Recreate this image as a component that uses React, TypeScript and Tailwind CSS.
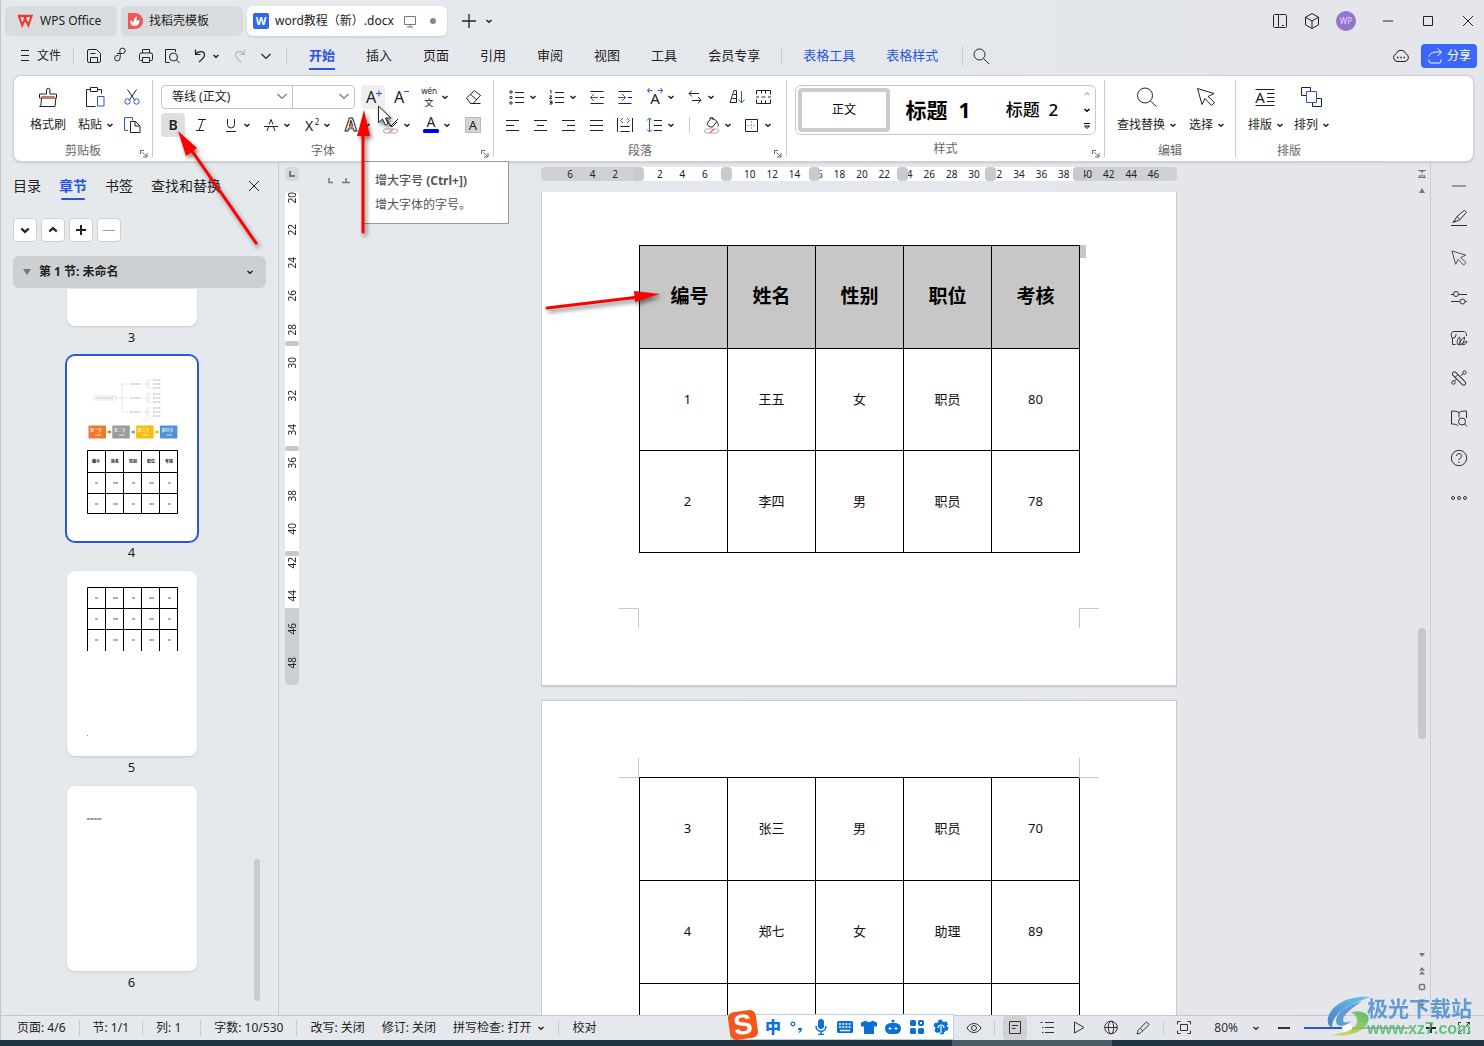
import React, { useState } from 'react';

const UI_FONT = "font-['Noto_Sans','Noto_Sans_CJK_SC',sans-serif]";
const BLUE = '#2b55e0';

/* ---------- icons: 24x24 grid, hairline strokes ---------- */

const icons: Record<string, React.ReactNode> = {
  menu: <path d="M8 6.500h8M8 11.500h8M8 16.500h8" />,
  save: <><path d="M5.500 7a1.500 1.500 0 0 1 1.500-1.500h7.500l4 4V17a1.500 1.500 0 0 1-1.500 1.500H7A1.500 1.500 0 0 1 5.500 17z" /><path d="M8.500 18.500v-5h7v5M8.500 9.500h5" /></>,
  link: <path d="M9 9.500h5.500a2.700 2.700 0 1 0-2.700-2.700c0 2 1 3.700.2 7.200a2.700 2.700 0 1 1-3-2.500h1.500" />,
  print: <path d="M8.500 9V5.500h7V9M8.500 16.500H6.500a1 1 0 0 1-1-1v-5a1.500 1.500 0 0 1 1.500-1.500h10a1.500 1.500 0 0 1 1.500 1.500v5a1 1 0 0 1-1 1h-2M8.500 13.500h7v5h-7z" />,
  preview: <><path d="M9.500 18.500H5.500v-13h10V8M5.500 5.500v11" /><circle cx="13.500" cy="13" r="4" /><path d="M16.500 16l3 3" /></>,
  undo: <path d="M7.500 5.500v5h5M7.500 10.300C10 6.500 16.500 6.500 16.500 11c0 3-3 4.500-5.500 7" strokeWidth="1.200" />,
  redo: <path d="M16.500 5.500v5h-5M16.500 10.300C14 6.500 7.500 6.500 7.500 11c0 3 3 4.500 5.500 7" strokeWidth="1.200" />,
  down: <path d="M7.500 10l4.500 4.500 4.500-4.500" strokeWidth="1.200" />,
  search: <><circle cx="10.500" cy="10.500" r="5.500" /><path d="M14.500 14.500l5.500 5.500" /></>,
  brush: <><path d="M10.500 9V5a1.700 1.700 0 0 1 3.400 0v4h6.600v4h-17V9zM5.500 13.500l-.5 5a2.500 2.500 0 0 1-1.500 3h15.500l.8-8" /><path d="M5.500 11.500h13" stroke="#d96d32" /></>,
  paste: <><path d="M7.500 4.500h-4v17h9M14.500 4.500h4v4M7.500 2.500h7v4h-7z" /><path d="M14.500 11.500h6.500v9.500h-6.500z" stroke={BLUE} /></>,
  cut: <><path d="M7.500 4.500l7.500 11M16.500 4.500L9 15.500" /><circle cx="7.500" cy="16.500" r="2.700" stroke={BLUE} /><circle cx="16.500" cy="16.500" r="2.700" stroke={BLUE} /></>,
  copy: <><path d="M8 17.500H4.500v-13h8v3" stroke={BLUE} /><path d="M10.500 8.500h5l4.500 4.500v6.500h-9.500zM15 8.500V13h5" /></>,
  eraser: <><path d="M5.500 13l8-7.500 6 5-7.500 8H9.500zM9.500 9.500l6.500 5.500M9.500 18.500h10" /></>,
  bullets: <><circle cx="6" cy="7" r="1.200" /><circle cx="6" cy="12.500" r="1.200" /><circle cx="6" cy="18" r="1.200" /><path d="M10 7.500h9M10 12.500h9M10 17.500h9" /></>,
  numbers: <><path d="M5 5.500h1v3M4.500 11h2.500l-2.500 2.500h2.500M4.500 16h2.500v3h-2.500M5 17.500h2M10 7.500h9M10 12.500h9M10 17.500h9" /></>,
  outdent: <><path d="M5.500 6.500h13M5.500 18.500h13M15 12.500h4" /><path d="M13 12.500H5.500m3.500-3.500l-3.500 3.500 3.500 3.500" stroke={BLUE} /></>,
  indent: <><path d="M5.500 6.500h13M5.500 18.500h13M15 12.500h4" /><path d="M5 12.500h7.500M9 9l3.500 3.500L9 16" stroke={BLUE} /></>,
  tabs: <path d="M9 5.500L6 8.500l3 3M6 8.500h10M15 12l3 3-3 3.500M18 15.500H9" />,
  sort: <><path d="M5 17.500h6.500v-12H9zM8.500 9.500h3M7.500 13.500h4" /><path d="M16.500 6v12M13.500 14.500l3 3.500 3-3.500" stroke={BLUE} /></>,
  cells: <path d="M5.500 9.500v-4h14v4M5.500 14.500v4h14v-4M10.500 5.500v3M14.500 5.500v3M10.500 15.500v3M14.500 15.500v3M5 12h3M10.500 12h4M17 12h3" />,
  left: <path d="M5 7.500h13M5 12.500h8M5 17.500h13" />,
  center: <path d="M5 7.500h13M8 12.500h7M5 17.500h13" />,
  right: <path d="M5 7.500h13M10 12.500h8M5 17.500h13" />,
  justify: <path d="M5 7.500h13M5 12.500h13M5 17.500h13" />,
  distribute: <><path d="M4.500 5v14M19.500 5v14M7.500 13.500h9M7.500 18.500h9" /><path d="M10 5L7.500 7.500 10 10M14 5l2.500 2.500L14 10" stroke={BLUE} /></>,
  spacing: <><path d="M11 7.500h8M11 12.500h8M11 17.500h8" /><path d="M6.500 5v14M4 7.500L6.500 5 9 7.500M4 16.500L6.500 19 9 16.500" stroke={BLUE} /></>,
  fill: <><path d="M8 9l4-4.500 5 4-4.500 5.500h-2.500L7 11.500zM17 9c1 2 2 3.500 1 4.500M9 6c1-2 4-2 4 1" /><rect x="4.500" y="16" width="14" height="4" rx="2" stroke="#aaa" /><path d="M10 19.500l4-3" stroke="#e33" /></>,
  border: <><path d="M5.500 6.500h12v12h-12z" /><path d="M11.500 8v9M7 12.500h9" stroke="#aaa" strokeDasharray="2 1" /></>,
  bigSearch: <><circle cx="11" cy="10.500" r="7.500" /><path d="M16.500 16l6 5.500" /></>,
  pointer: <path d="M3.500 3.500l4.500 16 3-6 6.500 7 3-3-6.500-6 6-3z" />,
  typeset: <path d="M2.500 4.500h19M2.500 20.500h19M14 8.500h7.500M14 12.500h7.500M14 16.500h7.500" />,
  arrange: <><path d="M7 10.500H2.500v-8h9V6M18 13.500h4.500v8h-9V18" /><path d="M7.500 6.500h10v11h-10z" stroke={BLUE} /></>,
  phone: <><path d="M11 5.500H6.500a1 1 0 0 0-1 1v11a1 1 0 0 0 1 1H11" /><rect x="10.500" y="5.500" width="8" height="13" rx="1" /><path d="M14 16.500h2" /></>,
  cube: <path d="M12 4.500l6.500 3.700v7.600L12 19.500l-6.500-3.700V8.200zM5.500 8.200L12 12l6.500-3.800M12 12v7.500" />,
  cloud: <><path d="M8 17.500a4 4 0 0 1-.8-7.700 5 5 0 0 1 9.600 0 4 4 0 0 1-.8 7.700z" /><path d="M8 13.500h1.500M11.300 13.500h1.500M14.500 13.500h1.500" strokeWidth="1.500" /></>,
  share: <path d="M6 15.500v1.500a2 2 0 0 0 2 2h8a2 2 0 0 0 2-2v-1.500M6 12.500c1-3.500 4-5 12-4.500M14.500 4.500L18.500 8 14.500 12" />,
  plus: <path d="M12 5v14M5 12h14" strokeWidth="1.300" />,
  close: <path d="M7 7l10 10M17 7L7 17" />,
  maximize: <path d="M7.500 7.500h9v9h-9z" />,
  minimize: <path d="M7 12h10" />,
  screen: <path d="M6.500 7.500h11v8h-11zM9 18h6M12 15.500V18" />,
  edit: <path d="M4 19.500h16M6 16.500l4-6 7.500-6.300 2 2-6.500 7.500-7 2.800zM10 10.500l3 3M9 15l-2.500 1" />,
  sliders: <><circle cx="9" cy="8" r="2.500" /><circle cx="15.500" cy="15.500" r="2.500" /><path d="M4 8.500h2.500M11.500 8.500H20M4 15.500h9M18 15.500h2" /></>,
  store: <path d="M8.500 18.500H5.500v-6.500C3 10 4 5.500 7 5.500h10.500c1.500.5 2 3 2 4.500M5 12c3 .5 4-1 4-4M11 19c-2-3 0-7 1.500-8 1 3 1 6-1.500 8zM12.500 19c0-4 3-7 5-8 0 3-1 7-5 8zM15 18.800c1-2.500 3-3.300 5-3.300-.5 2-2 3.300-5 3.300z" />,
  tools: <><rect x="3.500" y="10.500" width="17" height="4" rx="1.800" transform="rotate(45 12 12.500)" /><path d="M8 11.500l3-3" /><circle cx="17.500" cy="6.500" r="1.700" /><circle cx="6.500" cy="16.500" r="1.700" /><path d="M13.500 10l3-2.500M7.500 15l2-2" /></>,
  book: <><path d="M12 6.500c-2-1.200-4-1.500-7.500-1.500v13c3 0 4.500.3 6.500 1.500M12 6.500c2-1.200 4-1.500 7.500-1.500v7M12 6.500v5" /><circle cx="15" cy="15.500" r="3.500" /><path d="M17.500 18l2.500 2.500" /></>,
  help: <><circle cx="12" cy="12" r="7.700" /><path d="M9.500 10a2.500 2.500 0 1 1 3.500 2.300c-.8.4-1 .8-1 1.700M12 15.500v1.500" /></>,
  more: <><circle cx="6" cy="12" r="1.500" /><circle cx="12" cy="12" r="1.500" /><circle cx="18" cy="12" r="1.500" /></>,
  eye: <><path d="M5 12c3.500-6 10.500-6 14 0-3.500 6-10.500 6-14 0z" /><circle cx="12" cy="12" r="2.500" /></>,
  page: <path d="M6.500 5.500h11v12h-11zM9 9.500h6M9 12.500h3.500" />,
  outline: <path d="M10 6.500h9M10 11.500h9M10 16.500h9M5.500 6.500h2M7 11.500h1.500M7 16.500h1.500" />,
  play: <path d="M7.500 6v11l9.500-5.500z" />,
  globe: <><circle cx="12" cy="11.500" r="6.300" /><ellipse cx="12" cy="11.500" rx="2.700" ry="6.300" /><path d="M5.700 11.500h12.600" /></>,
  pen: <path d="M6 18c.5-3 1.500-4.500 3-5.500l6.500-6.700 2.700 2.700-6.700 6.500c-1 1.500-2.500 2.500-5.500 3zM9.500 12.500l2.300 2.300" />,
  fit: <path d="M5.500 8.500v-3h3M15.500 5.500h3v3M18.500 14.500v3h-3M8.500 17.500h-3v-3M8.500 8.500h7v6h-7z" />,
  expand: <path d="M6.500 15.500v2h3M17.500 8.500v-2h-3M6.500 17.500l4-4M17.500 6.500l-4 4M6.500 9V6.500H9M17.500 15v2.500H15" />,
};

function Icon({ name, className = '' }: { name: string; className?: string }) {
  return (
    <svg viewBox="0 0 24 24" fill="none" stroke="currentColor" aria-hidden="true" className={`w-6 h-6 shrink-0 ${className}`}>
      {icons[name]}
    </svg>
  );
}

function Caret({ className = '' }: { className?: string }) {
  return (
    <svg viewBox="0 0 8 8" fill="none" stroke="currentColor" strokeWidth="1.5" aria-hidden="true" className={`w-2 h-2 shrink-0 ${className}`}>
      <path d="M1.500 3L4 5.300 6.500 3" />
    </svg>
  );
}

/* Icons built around a letter keep it as text */
function LetterIcon({ kind }: { kind: string }) {
  const letter = (x: number, y: number, size: number, t: string, extra = {}) => (
    <text x={x} y={y} fontSize={size} textAnchor="middle" fill="currentColor" stroke="none" {...extra}>{t}</text>
  );
  return (
    <svg viewBox="0 0 24 24" fill="none" stroke="currentColor" aria-hidden="true" className="w-6 h-6 shrink-0 overflow-visible">
      {kind === 'grow' && <>{letter(10, 18, 16, 'A')}<path d="M15 8.500h6M18 5.500v6" stroke={BLUE} /></>}
      {kind === 'shrink' && <>{letter(10, 18, 16, 'A')}<path d="M15 6.500h5" stroke={BLUE} /></>}
      {kind === 'pinyin' && <>{letter(12, 9, 8, 'wén')}{letter(12, 21, 9, '文')}</>}
      {kind === 'bold' && letter(12, 17, 14, 'B', { fontWeight: 600 })}
      {kind === 'italic' && <path d="M9 6.500h8M7 17.500h8M14 6.500l-4 11" />}
      {kind === 'underline' && <path d="M8.500 6v5.500a3.500 3.500 0 0 0 7 0V6M7 18.500h10" />}
      {kind === 'strike' && <><path d="M8 18l1.500-4M16 18l-1.500-4M10 11.500l2-5 2 5M5 13.500h14" /></>}
      {kind === 'super' && <>{letter(10, 18, 14, 'X')}{letter(18, 12, 8, '2')}</>}
      {kind === 'effect' && <>{letter(12, 18, 17, 'A', { fill: 'none', stroke: 'currentColor', fontWeight: 700 })}<path d="M10 16l2-5 2 5z" stroke="#d96d32" /></>}
      {kind === 'highlight' && <><path d="M7 6l5 7 7-7M10 12l3 2 5-5" /><rect x="4.500" y="16" width="14" height="4" rx="2" stroke="#aaa" /><path d="M10 19.500l4-3" stroke="#e33" /></>}
      {kind === 'color' && <>{letter(12, 14, 14, 'A')}<rect x="4" y="16" width="16" height="4" rx="1.500" fill="#0000f0" stroke="none" /></>}
      {kind === 'shade' && <><rect x="4.500" y="4.500" width="15" height="15" fill="#d4d4d4" stroke="#bbb" />{letter(12, 17, 13, 'A')}</>}
      {kind === 'scale' && <>{letter(12, 19, 15, 'A')}<path d="M9.500 5.500h-5m2-2.500l-2 2.500 2 2.500M14.500 5.500h5m-2-2.500l2 2.500-2 2.500" stroke={BLUE} /></>}
      {kind === 'typeset' && <>{icons.typeset}{letter(7, 18, 15, 'A')}</>}
    </svg>
  );
}

const glyph = (icon: string) => (icon in icons && icon !== 'typeset' ? <Icon name={icon} /> : <LetterIcon kind={icon} />);

function ToolButton({ icon, label, className = '' }: { icon: string; label: string; className?: string }) {
  return (
    <button aria-label={label} className={`w-6 h-6 flex items-center justify-center rounded ${className}`}>
      {glyph(icon)}
    </button>
  );
}

function SplitButton({ icon, label }: { icon: string; label: string }) {
  return (
    <button aria-label={label} className="w-10 h-6 pl-1 flex items-center shrink-0">
      {glyph(icon)}
      <Caret />
    </button>
  );
}

function BigButton({ icon, label, caret = true }: { icon: string; label: string; caret?: boolean }) {
  return (
    <button className="flex flex-col items-center gap-1 shrink-0">
      <span className={caret ? 'pr-0.5' : ''}>{glyph(icon)}</span>
      <span className="h-6 flex items-center gap-1 whitespace-nowrap">
        {label}
        {caret && <Caret />}
      </span>
    </button>
  );
}

function Group({ title, width, launcher, children }: { title: string; width: string; launcher?: boolean; children: React.ReactNode }) {
  return (
    <section className={`relative flex flex-col shrink-0 pt-[5px] ${width}`}>
      <div className="h-[52px]">{children}</div>
      <h2 className="text-center text-[#666] leading-4 mt-1.5">{title}</h2>
      {launcher && (
        <button aria-label={`${title}设置`} className="absolute right-1 -bottom-px text-[#666]">
          <svg viewBox="0 0 8 8" fill="none" stroke="currentColor" className="w-2 h-2"><path d="M.5 4V.5H4M2.500 2.500l4 4M7 3v4H3" /></svg>
        </button>
      )}
    </section>
  );
}

const Rule = ({ className = 'h-4' }: { className?: string }) => <span className={`w-px shrink-0 bg-[#c8cbcf] ${className}`} />;

/* ---------- window chrome ---------- */

function TitleBar() {
  return (
    <header className="flex items-center h-9 shrink-0 pt-1.5 pl-1 text-[#222]">
      <div className="flex gap-1 items-center h-[30px]">
        <button className="w-28 h-[30px] rounded-md bg-[#d9dcdf] flex items-center gap-1.5 pl-3">
          <svg viewBox="0 0 18 14" fill="none" stroke="#e93b2f" strokeWidth="2.200" className="w-[17px]"><path d="M1 2h7l1 3M2 2l3.500 10L10 2h5.500L12 12 7.500 3" /></svg>
          WPS Office
        </button>
        <button className="w-[122px] h-[30px] rounded-md bg-[#d9dcdf] flex items-center gap-1.5 pl-1.5">
          <svg viewBox="0 0 16 16" className="w-4 h-4"><path d="M1 0h7a8 8 0 0 1 0 16H1z" fill="#f0575a" /><path d="M8 13C5 13 3 11 3.500 7.500 5 8 6 8.500 6.500 10 6.500 7 7.500 5 9.500 3c.5 2 .5 3-.5 5.500C10 7.500 11 7 12.500 7c0 3-1.500 6-4.500 6z" fill="#fff" /></svg>
          找稻壳模板
        </button>
        <button className="w-[200px] h-[30px] rounded-md bg-white shadow flex items-center pl-1.5 whitespace-nowrap">
          <span className="w-4 h-4 mr-1.5 rounded-xs bg-[#3366f0] text-white text-[11px] leading-4 font-bold text-center">W</span>
          word教程（新）.docx
          <Icon name="screen" className="ml-1 text-[#777]" />
          <span className="w-1.5 h-1.5 ml-2 rounded-full bg-[#888]" />
        </button>
      </div>
      <button aria-label="新建标签" className="ml-2.5"><Icon name="plus" /></button>
      <button aria-label="标签列表" className="ml-1"><Caret /></button>
      <div className="ml-auto flex items-center">
        <button aria-label="手机" className="w-8 flex justify-center"><Icon name="phone" /></button>
        <button aria-label="应用" className="w-8 flex justify-center"><Icon name="cube" /></button>
        <button className="w-5 h-5 mx-2 rounded-full bg-[#9673cf] text-[#e4d9f5] text-[8px]">WP</button>
        <button aria-label="最小化" className="w-10 ml-1 flex justify-center"><Icon name="minimize" /></button>
        <button aria-label="最大化" className="w-10 flex justify-center"><Icon name="maximize" /></button>
        <button aria-label="关闭" className="w-10 -mr-1 flex justify-center"><Icon name="close" /></button>
      </div>
    </header>
  );
}

const menus = ['插入', '页面', '引用', '审阅', '视图', '工具', '会员专享'];

function MenuBar() {
  return (
    <nav className="flex items-center h-[39px] shrink-0 pl-3 pr-[7px] text-[#222]">
      <button className="flex items-center"><Icon name="menu" />文件</button>
      <Rule className="h-4 mx-2 ml-3" />
      <div className="flex items-center gap-0.5">
        <ToolButton icon="save" label="保存" />
        <ToolButton icon="link" label="输出" />
        <ToolButton icon="print" label="打印" />
        <ToolButton icon="preview" label="打印预览" />
      </div>
      <button aria-label="撤销" className="ml-1 w-8 flex items-center"><Icon name="undo" /><Caret /></button>
      <button aria-label="恢复" className="ml-2 text-[#b5b8bc]"><Icon name="redo" /></button>
      <button aria-label="更多命令" className="ml-0.5"><Icon name="down" /></button>
      <Rule className="h-4 ml-2" />
      <div className="flex items-center gap-[31px] text-[13px] ml-[22px] whitespace-nowrap">
        <button className="h-7 pt-0.5 font-bold text-[#2b55e0] border-b-2 border-[#2b55e0]">开始</button>
        {menus.map(m => <button key={m}>{m}</button>)}
      </div>
      <Rule className="h-4 mx-[21px]" />
      <div className="flex items-center gap-[31px] text-[13px] text-[#2b55e0] whitespace-nowrap">
        <button>表格工具</button>
        <button>表格样式</button>
      </div>
      <Rule className="h-5 ml-6 mr-1.5" />
      <button aria-label="搜索"><Icon name="search" /></button>
      <button aria-label="云文档" className="ml-auto mr-2"><Icon name="cloud" /></button>
      <button className="w-14 h-6 rounded bg-[#3a66fb] text-white flex items-center pl-0.5"><Icon name="share" />分享</button>
    </nav>
  );
}

function Ribbon() {
  return (
    <div className="ml-3 mr-[10px] h-[87px] shrink-0 rounded-lg bg-white border border-[#cfd1d4] shadow flex py-1 overflow-hidden text-[#222]">
      <Group title="剪贴板" width="w-[138px]" launcher>
        <div className="flex pl-4">
          <BigButton icon="brush" label="格式刷" caret={false} />
          <div className="ml-3"><BigButton icon="paste" label="粘贴" /></div>
          <div className="flex flex-col gap-1 ml-1.5">
            <ToolButton icon="cut" label="剪切" />
            <ToolButton icon="copy" label="复制" />
          </div>
        </div>
      </Group>
      <Rule className="h-full" />
      <Group title="字体" width="w-[340px]" launcher>
        <div className="flex flex-col gap-1 pl-2">
          <div className="flex items-center">
            <div className="flex h-6 w-[194px] border border-[#c4c4c4] rounded">
              <div className="relative w-[131px] border-r border-[#c4c4c4]">
                <select aria-label="字体" className="appearance-none w-full h-full pl-2.5 bg-transparent outline-none"><option>等线 (正文)</option></select>
                <Icon name="down" className="absolute -right-0.5 -top-0.5 text-[#777] pointer-events-none" />
              </div>
              <div className="relative flex-1">
                <select aria-label="字号" className="appearance-none w-full h-full bg-transparent outline-none"><option></option></select>
                <Icon name="down" className="absolute -right-0.5 -top-0.5 text-[#777] pointer-events-none" />
              </div>
            </div>
            <ToolButton icon="grow" label="增大字号" className="ml-1.5 bg-[#efefef]" />
            <ToolButton icon="shrink" label="减小字号" className="ml-1" />
            <SplitButton icon="pinyin" label="拼音指南" />
            <ToolButton icon="eraser" label="清除格式" className="ml-2" />
          </div>
          <div className="flex items-center">
            <ToolButton icon="bold" label="加粗" className="bg-[#dfdfdf]" />
            <ToolButton icon="italic" label="倾斜" className="mx-1 mr-0.5" />
            <SplitButton icon="underline" label="下划线" />
            <SplitButton icon="strike" label="删除线" />
            <SplitButton icon="super" label="上标" />
            <SplitButton icon="effect" label="文字效果" />
            <SplitButton icon="highlight" label="突出显示" />
            <SplitButton icon="color" label="字体颜色" />
            <ToolButton icon="shade" label="字符底纹" className="ml-1.5" />
          </div>
        </div>
      </Group>
      <Rule className="h-full" />
      <Group title="段落" width="w-[292px]" launcher>
        <div className="flex flex-col gap-1 pl-[7px]">
          <div className="flex items-center">
            <SplitButton icon="bullets" label="项目符号" />
            <SplitButton icon="numbers" label="编号" />
            <ToolButton icon="outdent" label="减少缩进" className="ml-1" />
            <ToolButton icon="indent" label="增加缩进" className="ml-1" />
            <span className="w-0.5" />
            <SplitButton icon="scale" label="中文版式" />
            <SplitButton icon="tabs" label="制表位" />
            <ToolButton icon="sort" label="排序" className="ml-1.5" />
            <ToolButton icon="cells" label="分散" className="ml-0.5" />
          </div>
          <div className="flex items-center">
            <div className="flex gap-1">
              {['left', 'center', 'right', 'justify', 'distribute'].map(a => <ToolButton key={a} icon={a} label={a} />)}
            </div>
            <span className="w-0.5" />
            <SplitButton icon="spacing" label="行距" />
            <Rule className="h-4 ml-2.5 mr-1.5" />
            <SplitButton icon="fill" label="底纹" />
            <SplitButton icon="border" label="边框" />
          </div>
        </div>
      </Group>
      <Rule className="h-full" />
      <Group title="样式" width="w-[317px]" launcher>
        <div className="mx-2 h-[50px] border border-[#c8c8c8] rounded-md flex items-center p-0.5 pr-1 text-black">
          <button className="w-[92px] h-11 border-4 border-[#ccc] rounded">正文</button>
          <button className="w-24 text-[21px] font-bold">标题&nbsp; 1</button>
          <button className="w-[92px] text-[17px] font-medium">标题&nbsp; 2</button>
          <div className="flex flex-col items-center justify-between h-10 ml-auto">
            <button aria-label="上一行" className="flex text-[#bbb]"><Caret className="rotate-180" /></button>
            <button aria-label="下一行" className="flex"><Caret /></button>
            <button aria-label="全部样式" className="flex"><svg viewBox="0 0 8 8" fill="none" stroke="currentColor" className="w-2 h-2"><path d="M1 1.500h6M1.500 4h5L4 6.500z" /></svg></button>
          </div>
        </div>
      </Group>
      <Rule className="h-full" />
      <Group title="编辑" width="w-[130px]">
        <div className="flex pl-3 gap-3">
          <BigButton icon="bigSearch" label="查找替换" />
          <BigButton icon="pointer" label="选择" />
        </div>
      </Group>
      <Rule className="h-full" />
      <Group title="排版" width="w-[106px]">
        <div className="flex pl-3 gap-2.5">
          <BigButton icon="typeset" label="排版" />
          <BigButton icon="arrange" label="排列" />
        </div>
      </Group>
    </div>
  );
}

/* ---------- chapter panel ---------- */

const thumbCols = [29, 48, 66, 84, 102];
const headings = ['编号', '姓名', '性别', '职位', '考核'];

function Smudges({ y }: { y: number }) {
  return (
    <g fill="#b0b0b0">
      {thumbCols.map((x, i) => <rect key={x} x={x - (i % 2 ? 2 : 1)} y={y} width={i % 2 ? 5 : 3} height="2" />)}
    </g>
  );
}

function Thumb4() {
  const steps = [['#f07a2c', '第一步'], ['#9b9b9b', '第二步'], ['#f5bd0c', '第三步'], ['#4f93d6', '第四步']];
  return (
    <svg viewBox="0 0 130 185" className="w-full h-full" fill="none">
      <g stroke="#d4d5dc" strokeWidth=".6">
        <path d="M49 42h6M61 28h-6v28h6M55 42h6M76 28h4M76 42h4M76 56h4" />
        {[28, 42, 56].map(y => <path key={y} d={`M84 ${y - 4}h-4v8h4M80 ${y}h4`} />)}
        <rect x="27" y="40" width="22" height="4" />
      </g>
      <g stroke="#b4b4b4" strokeWidth="1.200" strokeDasharray="2 .6">
        <path d="M29 42h17" />
        {[28, 42, 56].map(y => (
          <path key={y} d={`M63 ${y}h11M86 ${y - 4}h8M86 ${y}h8M86 ${y + 4}h8`} />
        ))}
      </g>
      {steps.map(([color, label], i) => (
        <g key={label}>
          <rect x={21.500 + i * 23.800} y="69.500" width="17.500" height="13" rx="1" fill={color} />
          <text x={23 + i * 23.800} y="75.500" fontSize="4" fill="#fff">{label}</text>
          <path d={`M${28 + i * 23.800} 79h6`} stroke="#fff" strokeWidth="1" opacity=".7" />
          {i < 3 && <path d={`M${40.500 + i * 23.800} 75h2v-1.500l2 2.500-2 2.500V77h-2z`} fill={color} />}
        </g>
      ))}
      <path d="M20.500 94.500h90v63h-90zM20.500 116.500h90M20.500 137.500h90M38.500 94.500v63M56.500 94.500v63M74.500 94.500v63M92.500 94.500v63" stroke="#000" />
      {headings.map((h, i) => <text key={h} x={thumbCols[i]} y="106.500" fontSize="4" fontWeight="700" textAnchor="middle" fill="#222">{h}</text>)}
      <Smudges y={126} />
      <Smudges y={147} />
    </svg>
  );
}

function Thumb5() {
  return (
    <svg viewBox="0 0 130 185" className="w-full h-full" fill="none">
      <path d="M20.500 80V16.500h90V80M20.500 37.500h90M20.500 58.500h90M38.500 16.500V80M56.500 16.500V80M74.500 16.500V80M92.500 16.500V80" stroke="#000" />
      <Smudges y={26} />
      <Smudges y={47} />
      <Smudges y={68} />
      <rect x="20" y="164" width="1" height="1" fill="#999" />
    </svg>
  );
}

function Thumb6() {
  return (
    <svg viewBox="0 0 130 185" className="w-full h-full">
      <path d="M20 33h15" stroke="#777" strokeWidth="1.500" strokeDasharray="3 .6" />
    </svg>
  );
}

function ChapterPanel() {
  const [current, setCurrent] = useState(4);
  const pages = [
    { no: 3, art: null },
    { no: 4, art: <Thumb4 /> },
    { no: 5, art: <Thumb5 /> },
    { no: 6, art: <Thumb6 /> },
  ];
  const small = 'w-6 h-6 rounded bg-white border border-[#cdd0d3] flex items-center justify-center';
  return (
    <aside className="relative w-[278px] shrink-0 border-r border-[#c9cccf] flex flex-col text-[#222]">
      <div className="flex items-start gap-[18px] pl-3 pt-3.5 text-sm whitespace-nowrap h-14">
        <button>目录</button>
        <button className="font-bold text-[#2b55e0] flex flex-col items-center">章节<span className="w-6 h-0.5 mt-0.5 rounded bg-[#2b55e0]" /></button>
        <button>书签</button>
        <button>查找和替换</button>
        <button aria-label="关闭面板" className="ml-auto mr-3 -mt-0.5"><Icon name="close" /></button>
      </div>
      <div className="flex gap-1 pl-3">
        <button aria-label="展开" className={small}><Caret className="scale-150" /></button>
        <button aria-label="收起" className={small}><Caret className="scale-150 rotate-180" /></button>
        <button aria-label="新增节" className={small}><svg viewBox="0 0 10 10" className="w-2.5 h-2.5" stroke="#222" strokeWidth="2"><path d="M5 0v10M0 5h10" /></svg></button>
        <button aria-label="删除节" className={small}><span className="w-3 h-px bg-[#999]" /></button>
      </div>
      <button className="flex items-center h-8 mt-3.5 ml-3 mr-3 pl-2.5 pr-3 rounded-md bg-[#cdd0d2] font-bold shrink-0">
        <svg viewBox="0 0 8 8" className="w-2 h-2 mr-2" fill="#777"><path d="M0 1h8L4 7z" /></svg>
        第 1 节: 未命名
        <Caret className="ml-auto" />
      </button>
      <div className="flex-1 min-h-0 overflow-hidden flex flex-col items-center pt-px pr-4">
        {pages.map(p => (
          <div key={p.no} className="flex flex-col items-center shrink-0">
            <button
              aria-label={`第${p.no}页`}
              onClick={() => setCurrent(p.no)}
              className={`w-[130px] bg-white overflow-hidden ${p.no === 3 ? 'h-[37px] rounded-b-lg' : 'h-[185px] rounded-lg'} ${current === p.no ? 'ring-2 ring-[#2b55e0]' : 'shadow'}`}
            >
              {p.art}
            </button>
            <span className="h-[30px] leading-[22px] text-[13px]">{p.no}</span>
          </div>
        ))}
      </div>
      <div className="absolute right-[18px] bottom-3.5 w-1.5 h-[142px] rounded bg-[#c8cacc]" />
    </aside>
  );
}

/* ---------- document ---------- */

const hTicks = ['6', '4', '2', '', '2', '4', '6', '', ...Array.from({ length: 19 }, (_, i) => String(10 + i * 2))];
const vTicks = Array.from({ length: 14 }, (_, i) => String(22 + i * 2));

function HorizontalRuler() {
  return (
    <div className="relative h-3.5 mt-[5px] mb-[11px] rounded bg-white overflow-hidden text-[10px] leading-[14px] text-[#222] shrink-0">
      <div className="absolute inset-y-0 left-0 w-[97px] bg-[#cfd1d4]" />
      <div className="absolute inset-y-0 right-0 w-[97px] bg-[#cfd1d4]" />
      <div className="relative flex pl-[18px] pr-3">
        {hTicks.map((t, i) => <span key={i} className="flex-1 w-0 flex justify-center">{t}</span>)}
      </div>
      <div className="absolute inset-y-0 left-[92px] flex gap-[77px]">
        {[0, 1, 2, 3, 4, 5].map(i => <span key={i} className="w-[11px] rounded bg-[#cacaca]" />)}
      </div>
    </div>
  );
}

function VerticalRuler() {
  const digit = '[writing-mode:vertical-rl] rotate-180';
  return (
    <div className="w-[21px] shrink-0 pl-1.5 pt-[5px] text-[10px] leading-[14px] text-[#222]">
      <div className="w-3.5 h-3.5 rounded bg-[#d6d8da] mb-[11px] flex items-center justify-center">
        <span className="w-1.5 h-1.5 border-l-2 border-b-2 border-[#777]" />
      </div>
      <div className="relative w-3.5 h-[493px] pb-1.5 rounded bg-white overflow-hidden flex flex-col items-center">
        <div className="absolute inset-x-0 bottom-0 h-[77px] bg-[#cdd0d3]" />
        <div className="h-[21px] shrink-0"><span className={`block ${digit}`}>20</span></div>
        {vTicks.map(t => (
          <div key={t} className="relative flex-1 h-0 flex items-center"><span className={digit}>{t}</span></div>
        ))}
        <div className="absolute inset-x-0 top-[149px] flex flex-col gap-[100px]">
          {[0, 1, 2].map(i => <span key={i} className="h-[5px] rounded-full bg-[#c6c8ca]" />)}
        </div>
      </div>
    </div>
  );
}

function StaffTable({ rows, head }: { rows: string[][]; head?: boolean }) {
  const cell = 'border border-black p-0 first:pl-2 text-center';
  return (
    <table className="w-[441px] shrink-0 table-fixed border-collapse text-[13px] text-[#111]">
      {head && (
        <thead>
          <tr className="h-[103px] bg-[#c7c7c7] text-[19px] text-black">
            {headings.map(h => <th key={h} className="border border-black p-0 first:pl-3 text-center">{h}</th>)}
          </tr>
        </thead>
      )}
      <tbody>
        {rows.map((r, i) => (
          <tr key={i} className={head ? 'h-[102px]' : 'h-[103px]'}>{r.map((c, j) => <td key={j} className={cell}>{c}</td>)}</tr>
        ))}
      </tbody>
    </table>
  );
}

function DocumentArea() {
  const sheet = 'bg-white border-x border-[#c9c9c9] px-[97px] shrink-0 shadow-sm';
  const mark = 'w-5 h-5 border-[#c9c9c9]';
  return (
    <main className="relative flex-1 min-w-0 flex">
      <VerticalRuler />
      <div className="flex-1 min-w-0 flex flex-col items-center overflow-hidden">
        <div className="w-[636px] flex flex-col h-full">
          <HorizontalRuler />
          <div className="flex-1 min-h-0 overflow-hidden flex flex-col">
            <div className={`${sheet} h-[494px] border-b pt-[53px] flex flex-col`}>
              <div className="flex">
                <StaffTable head rows={[['1', '王五', '女', '职员', '80'], ['2', '李四', '男', '职员', '78']]} />
                <span className="w-1.5 h-[13px] shrink-0 bg-[#c7c7c7]" />
              </div>
              <div className="flex justify-between mt-[55px] -mx-5">
                <span className={`${mark} border-t border-r`} />
                <span className={`${mark} border-t border-l`} />
              </div>
            </div>
            <div className={`${sheet} border-t mt-3.5 pt-[57px] pb-24`}>
              <div className="flex justify-between -mx-5 -mb-px">
                <span className={`${mark} border-b border-r`} />
                <span className={`${mark} border-b border-l`} />
              </div>
              <StaffTable rows={[['3', '张三', '男', '职员', '70'], ['4', '郑七', '女', '助理', '89'], ['', '', '', '', '']]} />
            </div>
          </div>
        </div>
      </div>
      <div className="w-3 shrink-0 flex flex-col items-start text-[#777] pt-2 pb-2">
        <svg viewBox="0 0 8 8" className="w-2 h-2" fill="currentColor"><path d="M0 0h8v1H6L4 3 2 1H0zM0 7h8v1H0zM1 5h1.500v2H1zM3.500 4h1v3h-1zM5.500 5H7v2H5.500z" /></svg>
        <svg viewBox="0 0 8 8" className="w-2 h-2 mt-2" fill="currentColor"><path d="M4 2l3 5H1z" /></svg>
        <div className="mt-[434px] w-2 h-[111px] rounded bg-[#c6c8cb]" />
        <div className="mt-auto flex flex-col gap-2">
          <svg viewBox="0 0 8 8" className="w-2 h-2" fill="currentColor"><path d="M4 6L1 2h6z" /></svg>
          <svg viewBox="0 0 8 8" className="w-2 h-2" fill="currentColor"><path d="M4 0l3 3.500H1zM4 4l3 3.500H1z" /></svg>
          <svg viewBox="0 0 8 8" className="w-2 h-2" fill="none" stroke="currentColor" strokeWidth="1.500"><rect x="1.500" y="1.500" width="5" height="5" rx="1" /></svg>
          <svg viewBox="0 0 8 8" className="w-2 h-2" fill="currentColor"><path d="M4 4L1 .5h6zM4 8L1 4.500h6z" /></svg>
        </div>
      </div>
      {/* tab stop hints */}
      <svg viewBox="0 0 22 6" className="absolute left-[49px] top-4 w-[22px] h-1.5" fill="none" stroke="#777" strokeWidth="1.500"><path d="M1 0v4.500h4M14 4.500h8M18 0v4.500" /></svg>
      {/* tooltip of the grow-font button */}
      <div role="tooltip" className="absolute left-[83px] -top-px w-[147px] h-[63px] bg-white border border-[#9a9a9a] pl-3 pt-2 text-[#555] whitespace-nowrap">
        <p className="font-medium leading-[22px]">增大字号 <b>(Ctrl+])</b></p>
        <p className="leading-[26px]">增大字体的字号。</p>
      </div>
    </main>
  );
}

function SideTools() {
  return (
    <aside className="w-[54px] shrink-0 border-l border-[#c9cccf] flex flex-col items-center gap-4 pt-3 pr-0.5 pl-1 text-[#333]">
      <button aria-label="收起侧栏" className="h-6 flex items-center"><span className="w-3.5 h-0.5 bg-[#999]" /></button>
      <div className="flex flex-col gap-4 -mt-2">
        {['edit', 'pointer', 'sliders', 'store', 'tools', 'book', 'help', 'more'].map(n => (
          <button key={n} aria-label={n}><Icon name={n} className={n === 'pointer' ? 'p-0.5' : ''} /></button>
        ))}
      </div>
    </aside>
  );
}

/* ---------- bottom bars ---------- */

function StatusBar() {
  return (
    <footer className="flex items-center h-[25px] shrink-0 border-t border-[#c5c8cb] pl-4 pr-2 pb-px text-[#222] whitespace-nowrap">
      <div className="flex items-center gap-[13px]">
        <span>页面: 4/6</span><Rule />
        <span>节: 1/1</span><Rule />
        <span className="pr-1.5">列: 1</span><Rule />
        <span>字数: 10/530</span><Rule />
        <button>改写: 关闭</button>
        <button className="ml-1">修订: 关闭</button>
        <button className="ml-1 flex items-center gap-1.5">拼写检查: 打开 <Caret /></button>
        <Rule />
        <button>校对</button>
      </div>
      <div className="ml-auto flex items-center text-[#333]">
        <button aria-label="护眼模式"><Icon name="eye" /></button>
        <Rule className="h-3.5 mx-2" />
        <button aria-label="页面视图" className="rounded bg-[#cfd1d5]"><Icon name="page" /></button>
        <button aria-label="大纲视图" className="ml-2"><Icon name="outline" /></button>
        <button aria-label="阅读" className="ml-2"><Icon name="play" /></button>
        <button aria-label="网页" className="ml-2"><Icon name="globe" /></button>
        <button aria-label="书写" className="ml-2"><Icon name="pen" /></button>
        <Rule className="h-3.5 ml-2" />
        <button aria-label="适合页面" className="ml-2"><Icon name="fit" /></button>
        <button className="ml-[18px] flex items-center gap-3.5">80% <Caret /></button>
        <button aria-label="缩小" className="ml-[18px] w-3 h-6 flex items-center"><span className="w-3 h-0.5 bg-[#333]" /></button>
        <input
          type="range"
          aria-label="缩放"
          min={0}
          max={100}
          defaultValue={40}
          className="appearance-none w-[106px] h-0.5 ml-3.5 bg-linear-to-r from-[#2b55e0] from-40% to-[#aaa] to-40% [&::-webkit-slider-thumb]:appearance-none [&::-webkit-slider-thumb]:w-2.5 [&::-webkit-slider-thumb]:h-2.5 [&::-webkit-slider-thumb]:rounded-full [&::-webkit-slider-thumb]:bg-white"
        />
        <button aria-label="放大" className="ml-4"><svg viewBox="0 0 10 10" className="w-2.5 h-2.5" stroke="#222" strokeWidth="1.800"><path d="M5 0v10M0 5h10" /></svg></button>
        <button aria-label="全屏" className="ml-4"><Icon name="expand" /></button>
      </div>
    </footer>
  );
}

function InputMethodBar() {
  const svg = 'w-4 h-4 shrink-0';
  return (
    <div className="absolute left-[730px] bottom-1.5 w-56 h-[26px] bg-white border border-[#b9cde3] flex items-center gap-2 pl-[34px] text-[#0b6fd8]">
      <span className="absolute -left-0.5 bottom-0 w-7 h-7 rounded-md bg-[#f4571c] -rotate-8 text-white text-[28px] leading-7 font-bold text-center font-['Liberation_Sans']">S</span>
      <span className="w-4 text-base leading-6 font-black">中</span>
      <svg viewBox="0 0 16 16" className={svg} fill="currentColor"><circle cx="4" cy="5" r="1.800" fill="none" stroke="currentColor" strokeWidth="1.300" /><path d="M9 9h4c0 3-1 4-3 5l-.5-1c1-.5 1.300-1 1.300-2H9z" /></svg>
      <svg viewBox="0 0 16 16" className={svg} fill="currentColor"><rect x="5" y="0" width="6" height="10" rx="3" /><path d="M3 7c0 7 10 7 10 0M8 12v3M5 15.500h6" fill="none" stroke="currentColor" strokeWidth="1.500" /></svg>
      <svg viewBox="0 0 16 16" className={svg}><rect x="0" y="2" width="16" height="12" rx="1.500" fill="currentColor" /><path d="M2 5h12M2 8h12" stroke="#fff" strokeWidth="1.600" strokeDasharray="2 1.200" /><path d="M3 11.500h10" stroke="#fff" strokeWidth="1.500" /></svg>
      <svg viewBox="0 0 16 16" className={svg} fill="currentColor"><path d="M5 1.500c1 2 5 2 6 0l5 2v4h-3V15H3V7.500H0v-4z" /></svg>
      <svg viewBox="0 0 16 16" className={svg} fill="currentColor"><circle cx="8" cy="2" r="1.500" /><rect x="0" y="4" width="16" height="11" rx="5.500" /><path d="M3.500 9.500h3M5 8v3M9.500 9.500h3M11 8v3" stroke="#fff" /></svg>
      <svg viewBox="0 0 16 16" className={svg} fill="currentColor"><rect x="1" y="1" width="6" height="6" rx="1.500" /><rect x="1" y="9" width="6" height="6" rx="1.500" /><rect x="9" y="9" width="6" height="6" rx="1.500" /><rect x="10" y="2" width="4" height="4" rx="1" fill="none" stroke="currentColor" strokeWidth="2" /></svg>
      <svg viewBox="0 0 16 16" className={svg}><circle cx="8" cy="8" r="6" fill="currentColor" /><circle cx="8" cy="8" r="6.200" fill="none" stroke="currentColor" strokeWidth="2.500" strokeDasharray="3.500 3" /><path d="M8 14V7M5 9c0-4 6-4 6 0" fill="none" stroke="#fff" strokeWidth="1.200" /></svg>
    </div>
  );
}

function Watermark() {
  return (
    <div className="absolute right-3 bottom-2 flex items-center pointer-events-none whitespace-nowrap opacity-85">
      <svg viewBox="0 0 44 42" className="w-11 h-[42px]">
        <defs>
          <linearGradient id="swBlue" x1="0" y1="1" x2="1" y2="0"><stop offset="0" stopColor="#2c6fc0" /><stop offset="1" stopColor="#58c0f0" /></linearGradient>
          <linearGradient id="swGreen" x1="0" y1="1" x2="1" y2="0"><stop offset="0" stopColor="#e6dc3c" /><stop offset="1" stopColor="#3fb35a" /></linearGradient>
        </defs>
        <path d="M43 1C22-1 4 9 1 22c-1 5 1 9 4 9 0-10 9-20 38-30z" fill="url(#swBlue)" />
        <path d="M35 5C18 10 9 18 9 25c0 6 9 7 15 0-4 2-8 2-8-1 0-5 8-11 19-19z" fill="#4a8fd0" />
        <path d="M24 16c12-2 20 2 17 10-3 9-20 16-37 13 12-2 27-5 26-15 0-4-3-6-6-8z" fill="url(#swGreen)" />
      </svg>
      <div className="-ml-1">
        <p className="text-[21px] leading-6 font-bold text-[#4a8fd0]">极光下载站</p>
        <p className="text-base leading-[18px] font-bold text-[#52b973] font-['Liberation_Sans']">www.xz7.com</p>
      </div>
    </div>
  );
}

/* Red guide arrows and the mouse pointer, drawn over the window */
function Annotations() {
  return (
    <svg viewBox="0 0 700 330" className="absolute left-0 top-0 w-[700px] h-[330px] pointer-events-none drop-shadow-[2px_3px_2px_rgba(0,0,0,0.5)]" stroke="#f00" strokeLinecap="round" fill="#f00">
      <path d="M378.500 106.500v16l4-3.500 3 6 2.500-1.500-2.500-5.500h5z" fill="#fff" stroke="#223" />
      <path d="M256 243L190 148" strokeWidth="3" />
      <path d="M178 131l19 17-11 8z" stroke="none" />
      <path d="M363 232V134" strokeWidth="3" />
      <path d="M364 110l6 26h-13z" stroke="none" />
      <path d="M547 308l92-11" strokeWidth="3" />
      <path d="M660 294l-26-3 1 11z" stroke="none" />
    </svg>
  );
}

export default function App() {
  return (
    <div className={`relative h-screen overflow-hidden flex flex-col text-xs bg-linear-to-r from-[#e5e9ec] to-[#e4e6ec] ${UI_FONT}`}>
      <div className="flex-1 min-h-0 flex flex-col border-l border-[#c2c5c8]">
        <TitleBar />
        <MenuBar />
        <Ribbon />
        <div className="flex-1 min-h-0 flex">
          <ChapterPanel />
          <DocumentArea />
          <SideTools />
        </div>
        <StatusBar />
      </div>
      <div className="h-1.5 shrink-0 bg-[#1f3440] flex"><span className="w-40 ml-[952px] bg-[#4b5b66]" /></div>
      <InputMethodBar />
      <Watermark />
      <Annotations />
    </div>
  );
}
